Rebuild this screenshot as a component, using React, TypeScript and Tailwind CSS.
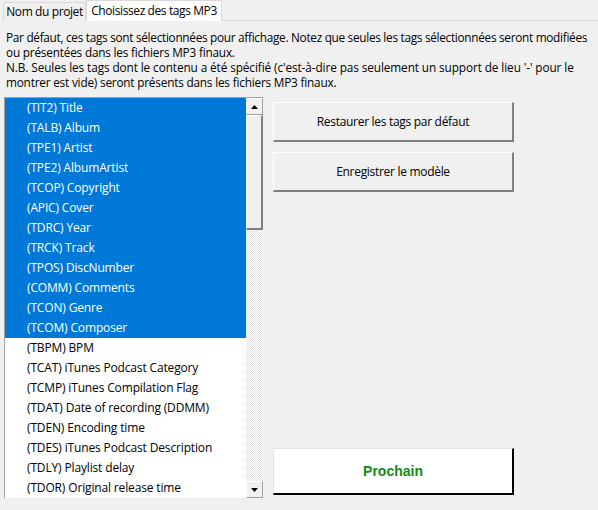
import React from "react";

const tags = [
  { label: "(TIT2) Title", sel: true },
  { label: "(TALB) Album", sel: true },
  { label: "(TPE1) Artist", sel: true },
  { label: "(TPE2) AlbumArtist", sel: true },
  { label: "(TCOP) Copyright", sel: true },
  { label: "(APIC) Cover", sel: true },
  { label: "(TDRC) Year", sel: true },
  { label: "(TRCK) Track", sel: true },
  { label: "(TPOS) DiscNumber", sel: true },
  { label: "(COMM) Comments", sel: true },
  { label: "(TCON) Genre", sel: true },
  { label: "(TCOM) Composer", sel: true },
  { label: "(TBPM) BPM", sel: false },
  { label: "(TCAT) iTunes Podcast Category", sel: false },
  { label: "(TCMP) iTunes Compilation Flag", sel: false },
  { label: "(TDAT) Date of recording (DDMM)", sel: false },
  { label: "(TDEN) Encoding time", sel: false },
  { label: "(TDES) iTunes Podcast Description", sel: false },
  { label: "(TDLY) Playlist delay", sel: false },
  { label: "(TDOR) Original release time", sel: false },
];

function Arrow({ down }: { down?: boolean }) {
  return (
    <svg width="7" height="4" viewBox="0 0 7 4">
      {down ? <path d="M0 0h7L3.5 4z" fill="#000" /> : <path d="M0 4h7L3.5 0z" fill="#000" />}
    </svg>
  );
}

export default function App() {
  return (
    <div className="relative h-[510px] w-[598px] overflow-hidden bg-[#f0f0f0] font-['Open_Sans','Noto_Sans',sans-serif] text-[12px] text-black">
      {/* tabs */}
      <div className="flex h-[21px] items-end">
        <div className="ml-[3px] flex h-[19px] w-[83px] items-center justify-center border border-b-0 border-[#d9d9d9] bg-[#f0f0f0] leading-none tracking-[-0.4px]">
          Nom du projet
        </div>
        <div className="flex h-[21px] w-[136px] items-center justify-center border border-b-0 border-[#d9d9d9] bg-white leading-none tracking-[-0.4px]">
          Choisissez des tags MP3
        </div>
        <div className="h-px flex-1 self-end bg-[#d9d9d9]" />
      </div>

      <div className="mt-[9px] whitespace-nowrap pl-[6px] text-[11.8px] leading-[15px] tracking-[-0.2px]">
        <p className="tracking-[-0.29px]">
          Par défaut, ces tags sont sélectionnées pour affichage. Notez que seules les tags sélectionnées seront modifiées
        </p>
        <p>ou présentées dans les fichiers MP3 finaux.</p>
        <p className="tracking-[-0.1px]">
          N.B. Seules les tags dont le contenu a été spécifié (c'est-à-dire pas seulement un support de lieu '-' pour le
        </p>
        <p>montrer est vide) seront présents dans les fichiers MP3 finaux.</p>
      </div>

      <div className="mt-[7px] flex pl-[4px]">
        {/* list box */}
        <div className="flex h-[401px] w-[259px] border-l border-t border-[#a0a0a0] bg-white">
          <div className="flex-1 overflow-hidden">
            {tags.map((t) => (
              <div
                key={t.label}
                className={
                  "flex h-[20px] items-center whitespace-nowrap pl-[22px] tracking-[-0.15px] " +
                  (t.sel ? "bg-[#0078d7] text-white" : "text-black")
                }
              >
                {t.label}
              </div>
            ))}
          </div>
          {/* scrollbar */}
          <div className="flex w-[17px] flex-col bg-[repeating-conic-gradient(#ffffff_0_25%,#e3e3e3_0_50%)] bg-[length:2px_2px]">
            <div className="flex h-[17px] items-center justify-center border-b border-r border-t border-l border-b-[#a0a0a0] border-l-white border-r-[#a0a0a0] border-t-white bg-[#f0f0f0]">
              <Arrow />
            </div>
            <div className="h-[115px] border-b-2 border-l border-r-2 border-t border-b-[#808080] border-l-white border-r-[#808080] border-t-white bg-[#f0f0f0]" />
            <div className="flex-1" />
            <div className="flex h-[17px] items-center justify-center border-b border-r border-t border-l border-b-[#a0a0a0] border-l-white border-r-[#a0a0a0] border-t-white bg-[#f0f0f0]">
              <Arrow down />
            </div>
          </div>
        </div>

        {/* buttons */}
        <div className="ml-[10px] flex w-[241px] flex-col">
          <button className="mt-[5px] h-[40px] border-b-2 border-l border-r-2 border-t border-b-[#808080] border-l-white border-r-[#808080] border-t-white bg-[#f0f0f0] text-[12px] tracking-[-0.3px]">
            Restaurer les tags par défaut
          </button>
          <button className="mt-[10px] h-[40px] border-b-2 border-l border-r-2 border-t border-b-[#808080] border-l-white border-r-[#808080] border-t-white bg-[#f0f0f0] text-[12px] tracking-[-0.3px]">
            Enregistrer le modèle
          </button>
          <div className="flex-1" />
          <button className="mb-[3px] h-[47px] border-b-2 border-l border-r-2 border-t border-b-[#000] border-l-[#e3e3e3] border-r-[#000] border-t-[#e3e3e3] bg-white font-['Liberation_Sans',Arial,sans-serif] text-[14px] font-bold text-[#138a13]">
            Prochain
          </button>
        </div>
      </div>
    </div>
  );
}
